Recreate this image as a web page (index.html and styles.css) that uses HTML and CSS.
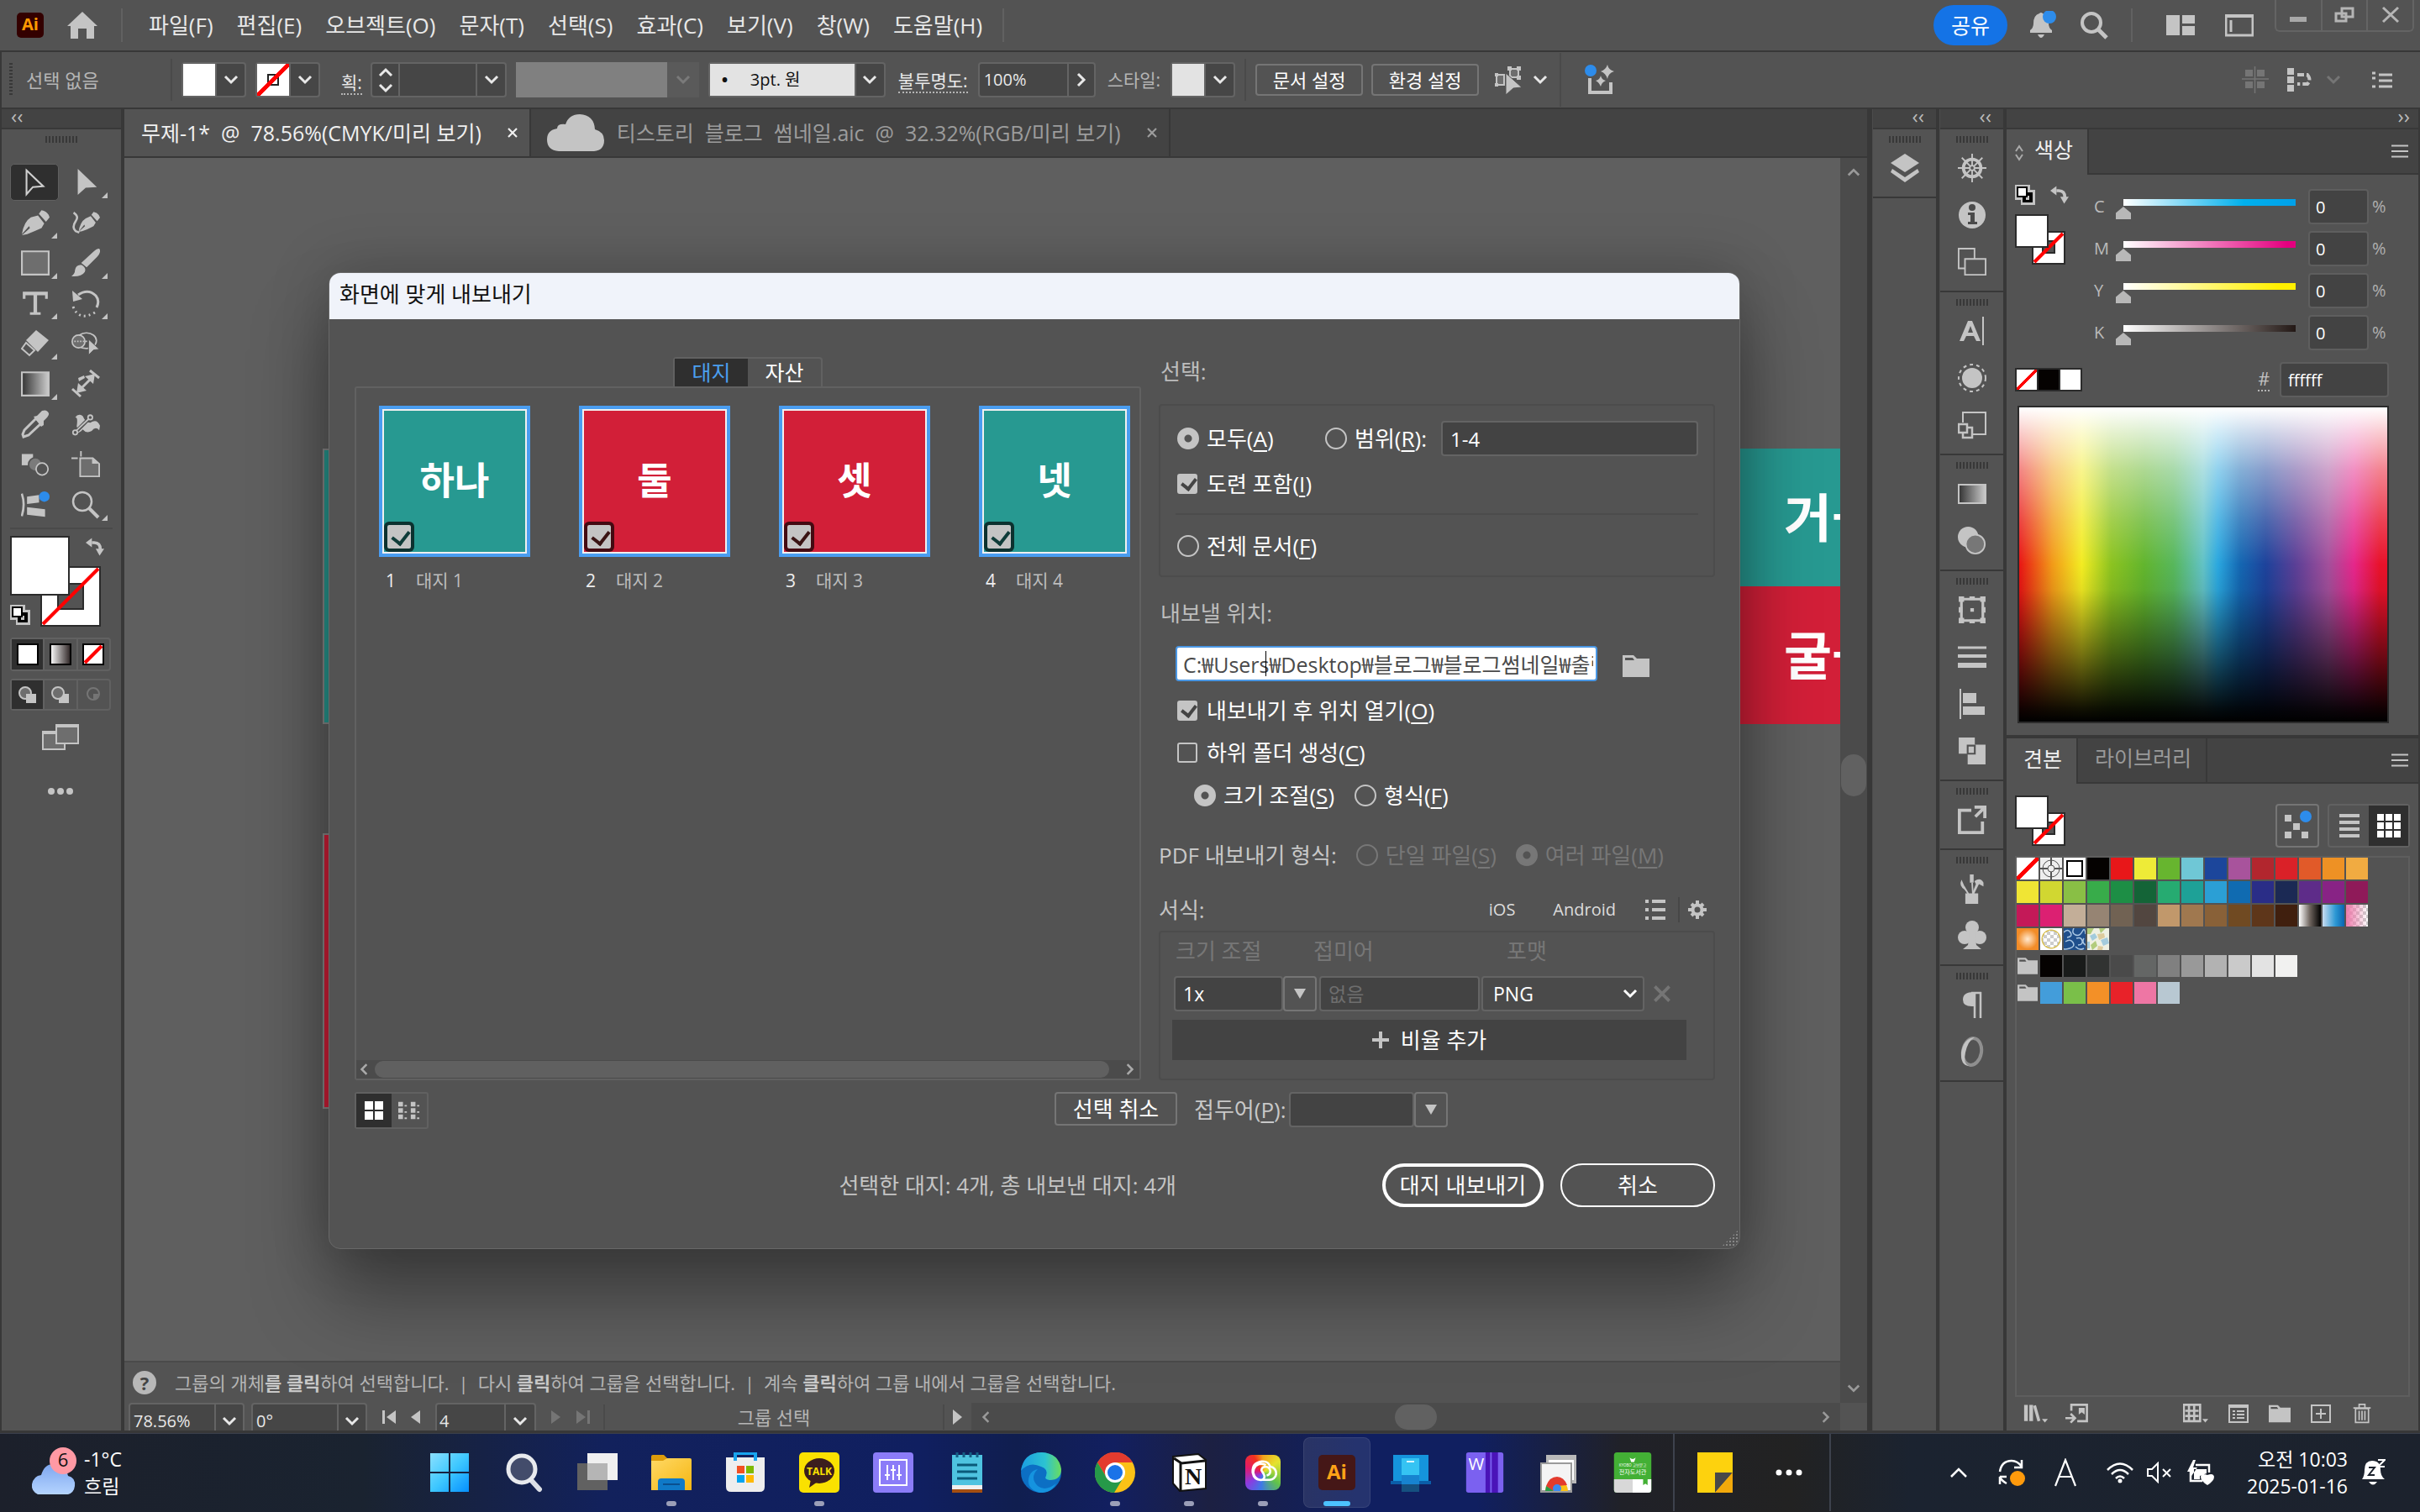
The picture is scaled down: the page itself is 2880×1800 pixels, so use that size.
FILE: index.html
```html
<!DOCTYPE html>
<html lang="ko">
<head>
<meta charset="utf-8">
<title>화면에 맞게 내보내기</title>
<meta name="viewport" content="width=device-width, initial-scale=1">
<link rel="stylesheet" href="styles.css">
</head>
<body>
<svg class="defs" aria-hidden="true">
  <defs>
    <linearGradient id="gray" x1="0" x2="1"><stop offset="0" stop-color="#333"/><stop offset="1" stop-color="#ccc"/></linearGradient>
    <linearGradient id="mono" x1="0" x2="1"><stop offset="0" stop-color="#fff"/><stop offset="1" stop-color="#2b2222"/></linearGradient>
    <linearGradient id="sky" x1="0" y1="0" x2="1" y2="1"><stop offset="0" stop-color="#8be0ff"/><stop offset=".5" stop-color="#3fc8ff"/><stop offset="1" stop-color="#0590ff"/></linearGradient>
    <linearGradient id="gold" x1="0" y1="0" x2="1" y2="1"><stop offset="0" stop-color="#ffd965"/><stop offset="1" stop-color="#f6b612"/></linearGradient>
    <linearGradient id="edgeA" x1="0" y1="0" x2="1" y2="0"><stop offset="0" stop-color="#1b9de2"/><stop offset=".6" stop-color="#2cc3d2"/><stop offset="1" stop-color="#6bdc5c"/></linearGradient>
    <linearGradient id="cloudy" x1="0" y1="0" x2="0" y2="1"><stop offset="0" stop-color="#7ea6ee"/><stop offset="1" stop-color="#b4d4ff"/></linearGradient>
  </defs>
  <symbol id="down" viewBox="0 0 18 12"><path d="M2 2l7 7 7-7" fill="none" stroke="currentColor" stroke-width="3"/></symbol>
  <symbol id="up" viewBox="0 0 18 12"><path d="M2 10l7-7 7 7" fill="none" stroke="currentColor" stroke-width="3"/></symbol>
  <symbol id="right" viewBox="0 0 12 18"><path d="M2 2l7 7-7 7" fill="none" stroke="currentColor" stroke-width="3"/></symbol>
  <symbol id="left" viewBox="0 0 12 18"><path d="M10 2L3 9l7 7" fill="none" stroke="currentColor" stroke-width="3"/></symbol>
  <symbol id="tri" viewBox="0 0 14 14"><path d="M0 1h14L7 13z" fill="currentColor"/></symbol>
  <symbol id="fold" viewBox="0 0 32 26"><path d="M0 0h13l4 4h15v22H0zM3 3v3h11l-2-3z" fill="currentColor" fill-rule="evenodd"/></symbol>
  <symbol id="menu" viewBox="0 0 20 16"><path d="M0 1.500h20M0 8h20M0 14.500h20" stroke="currentColor" stroke-width="2"/></symbol>
  <symbol id="x" viewBox="0 0 14 14"><path d="M2 2l10 10M12 2L2 12" stroke="currentColor" stroke-width="2.200"/></symbol>
  <symbol id="swap" viewBox="0 0 24 24"><path d="M8 6h3q8 0 8 9" fill="none" stroke="currentColor" stroke-width="4"/><path d="M0 6l8-6v12zM13 14h11l-6 9z" fill="currentColor"/></symbol>
  <symbol id="reset" viewBox="0 0 24 24"><path d="M0 0h18v6h6v18H7v-6H0z" fill="#c4c4c4"/><path d="M8 9h13v12H9v-6h4v3h4v-5H8z" fill="#000"/><path d="M3 3h11v11H3z" fill="#fff" stroke="#000" stroke-width="2"/></symbol>
  <symbol id="pen" viewBox="0 0 32 30"><path d="M1 28Q3 14 11 9l8-2 7 9-3 5Q14 25 7 28L1 29l9-8-1-2zM20 5l3-4q7 1 9 8l-4 5z" fill="currentColor"/></symbol>
</svg>

<header class="titlebar">
  <span class="ai-badge">Ai</span>
  <svg class="home" viewBox="0 0 36 32"><path d="M18 0L36 17h-4v15h-9V20h-10v12H4V17H0z" fill="#c4c4c4"/></svg>
  <span class="vsep"></span>
  <nav class="menus">
    <a href="#">파일(F)</a><a href="#">편집(E)</a><a href="#">오브젝트(O)</a><a href="#">문자(T)</a><a href="#">선택(S)</a><a href="#">효과(C)</a><a href="#">보기(V)</a><a href="#">창(W)</a><a href="#">도움말(H)</a>
  </nav>
  <span class="vsep"></span>
  <div class="title-right">
    <button class="share">공유</button>
    <svg class="bell" viewBox="0 0 32 34"><path d="M12 3q2-2 4 0 7 2 7 12 0 5 4 8v3H1v-3q4-3 4-8Q5 5 12 3zM10 28h8q-4 8-8 0z" fill="#c4c4c4"/><circle cx="24" cy="7" r="8" fill="#2d8ceb"/></svg>
    <svg class="find" viewBox="0 0 34 34"><circle cx="14" cy="14" r="11" fill="none" stroke="#c4c4c4" stroke-width="4"/><path d="M22 22l10 10" stroke="#c4c4c4" stroke-width="5"/></svg>
    <span class="vsep"></span>
    <svg class="lay" viewBox="0 0 34 24"><path d="M0 0h16v24H0zM19 0h15v10H19zM19 13h15v11H19z" fill="#c4c4c4"/></svg>
    <svg class="work" viewBox="0 0 34 28"><path d="M1 3h32v23H1zM7 8v14" fill="none" stroke="#c4c4c4" stroke-width="3"/><path d="M0 1h34v4H0z" fill="#c4c4c4"/></svg>
    <div class="wincontrols">
      <button aria-label="최소화"><svg viewBox="0 0 28 24"><path d="M4 14h20v6H4z" fill="#a8a8a8"/></svg></button>
      <button aria-label="이전 크기로"><svg viewBox="0 0 28 24"><path d="M11 4h13v10H11zM4 10h12v9H4z" fill="#535353" stroke="#b5b5b5" stroke-width="3"/></svg></button>
      <button aria-label="닫기"><svg viewBox="0 0 28 24"><path d="M5 3l18 17M23 3L5 20" stroke="#b5b5b5" stroke-width="3"/></svg></button>
    </div>
  </div>
</header>

<section class="control">
  <span class="vgrip"></span>
  <span class="c-state">선택 없음</span>
  <span class="csep"></span>
  <div class="combo"><span class="sw white"></span><button aria-label="칠"><svg><use href="#down"/></svg></button></div>
  <div class="combo"><span class="sw none"><i></i></span><button aria-label="획 색상"><svg><use href="#down"/></svg></button></div>
  <label class="dotted c-stroke" for="strokew">획:</label>
  <div class="combo c-step"><span class="steps"><svg><use href="#up"/></svg><svg><use href="#down"/></svg></span><input id="strokew" type="text"><button aria-label="획 두께"><svg><use href="#down"/></svg></button></div>
  <div class="profile"><span></span><svg><use href="#down"/></svg></div>
  <div class="combo c-brush"><span class="brush"><b>•</b>3pt. 원</span><button aria-label="브러쉬"><svg><use href="#down"/></svg></button></div>
  <label class="dotted c-op" for="op">불투명도:</label>
  <div class="combo c-opv"><input id="op" type="text" value="100%"><button aria-label="불투명도"><svg class="sr"><use href="#right"/></svg></button></div>
  <span class="c-style">스타일:</span>
  <div class="combo"><span class="sw pale"></span><button aria-label="스타일"><svg><use href="#down"/></svg></button></div>
  <span class="csep c-sep2"></span>
  <button class="cbtn">문서 설정</button>
  <button class="cbtn">환경 설정</button>
  <svg class="i36" viewBox="0 0 36 36"><path d="M3 12h9v12H3zM19 5h10v10H19z" fill="#6e6e6e" stroke="#c4c4c4" stroke-width="2"/><path d="M1 10h4v4H1zM1 22h4v4H1zM16 2h5v5h-5zM27 2h5v5h-5zM27 13h5v5h-5zM16 13h5v5h-5z" fill="#c4c4c4"/><path d="M14 10l19 17-10 1-9 8z" fill="#c4c4c4" stroke="#535353"/></svg>
  <svg class="chev"><use href="#down"/></svg>
  <span class="csep tall"></span>
  <svg class="i36" viewBox="0 0 36 36"><path d="M6 16v17h25V21" fill="none" stroke="#c4c4c4" stroke-width="4"/><path d="M27 0q1 6 8 8-7 2-8 9-2-7-8-9 6-2 8-8zM19 13q1 5 6 6-5 2-6 7-2-5-6-7 5-1 6-6z" fill="#c4c4c4"/><circle cx="7" cy="7" r="7" fill="#2d8ceb"/></svg>
  <div class="control-right">
    <svg class="i32 dim" viewBox="0 0 32 32"><path d="M4 4h9v8H4zM18 4h9v8h-9zM4 18h9v8H4zM18 18h9v8h-9z" fill="currentColor"/><path d="M15.500 0v32M0 15h32" stroke="currentColor" stroke-width="1.500"/></svg>
    <svg class="i32" viewBox="0 0 32 32"><path d="M1 2h8v8H1zM1 12h8v8H1zM1 22h8v8H1z" fill="#c4c4c4"/><path d="M13 10h12q5 6 0 11H13" fill="none" stroke="#c4c4c4" stroke-width="4" stroke-dasharray="8 3"/></svg>
    <svg class="chev dim"><use href="#down"/></svg>
    <svg class="i24 gapl" viewBox="0 0 24 20"><path d="M0 2h4M0 8h4M0 18h4M8 4h16M8 11h16M8 18h16" stroke="#c4c4c4" stroke-width="3"/></svg>
  </div>
</section>

<main class="app">
  <aside class="toolbar">
    <div class="dhead left"><span>‹‹</span></div>
    <span class="grip"></span>
    <div class="tools">
      <button class="on" aria-label="선택"><svg viewBox="0 0 32 36"><path d="M6 3l21 20-13 1-8 9z" fill="none" stroke="#d0d0d0" stroke-width="2.200"/></svg></button>
      <button class="more" aria-label="직접 선택"><svg viewBox="0 0 32 36"><path d="M6 1l24 23-14 1L6 34z" fill="currentColor"/></svg></button>
      <button class="more" aria-label="펜"><svg><use href="#pen"/></svg></button>
      <button aria-label="곡률"><svg viewBox="0 0 40 32"><path d="M3 2q8 5 3 12-6 9 0 14l5 2" fill="none" stroke="currentColor" stroke-width="3"/><path d="M10 29Q12 15 20 10l7-3 7 9-3 5Q22 26 15 28l-5 1 9-8-1-2zM28 5l3-4q7 1 9 8l-4 5z" fill="currentColor"/></svg></button>
      <button class="more" aria-label="사각형"><svg viewBox="0 0 32 32"><path d="M1 3h30v26H1z" fill="#6e6e6e" stroke="currentColor" stroke-width="2"/></svg></button>
      <button class="more" aria-label="페인트브러쉬"><svg viewBox="0 0 32 32"><path d="M31 0q3 3-2 9L17 21l-6-5L24 4q4-4 7-4zM0 31q4-3 4-7 1-6 7-6 6 3 4 8-4 6-15 5z" fill="currentColor"/></svg></button>
      <button class="more" aria-label="문자"><svg viewBox="0 0 32 32"><path d="M2 3h28v8h-3V7h-9v19h4v3H10v-3h4V7H5v4H2z" fill="currentColor"/></svg></button>
      <button class="more" aria-label="회전"><svg viewBox="0 0 34 34"><path d="M8 7Q20-1 29 8q5 6 1 14" fill="none" stroke="currentColor" stroke-width="3"/><path d="M1 2l1 13 11-3z" fill="currentColor"/><path d="M2 21q7 18 26 7" fill="none" stroke="currentColor" stroke-width="3" stroke-dasharray="2 4"/></svg></button>
      <button class="more" aria-label="지우개"><svg viewBox="0 0 34 34"><path d="M18 1l15 12-13 14L6 13z" fill="currentColor"/><path d="M6 16L1 23l9 8 6-6z" fill="none" stroke="currentColor" stroke-width="2"/></svg></button>
      <button aria-label="도형 구성"><svg viewBox="0 0 40 34"><ellipse cx="21" cy="13" rx="14" ry="11" fill="none" stroke="currentColor" stroke-width="2"/><circle cx="10" cy="14" r="9" fill="#6e6e6e" stroke="currentColor" stroke-width="2"/><path d="M4 14h20" stroke="currentColor" stroke-width="2" stroke-dasharray="2 2"/><path d="M24 11l15 14-8 1-7 7z" fill="currentColor" stroke="#535353"/></svg></button>
      <button class="more" aria-label="그레이디언트"><svg viewBox="0 0 32 32"><path d="M1 3h30v26H1z" fill="url(#gray)" stroke="currentColor" stroke-width="2"/></svg></button>
      <button aria-label="치수"><svg viewBox="0 0 34 34"><path d="M9 25L25 9M1 23l10 9M22 1l11 9" stroke="currentColor" stroke-width="3"/><path d="M6 28l2-12 10 9zM28 5l-2 12-10-9zM8 10l7-3 1 3-7 4z" fill="currentColor"/></svg></button>
      <button aria-label="스포이드"><svg viewBox="0 0 34 34"><path d="M18 10l6 6L9 30l-6 2-1-3 2-5z" fill="none" stroke="currentColor" stroke-width="3"/><path d="M15 8l4-1 6-6q6-2 8 3 1 3-6 9v5l-3 2z" fill="currentColor"/></svg></button>
      <button aria-label="퍼펫 뒤틀기"><svg viewBox="0 0 38 34"><path d="M5 8Q9 2 15 6q4 9 10 9 9-6 13 4l-1 6q-5-6-10 1-7 4-12-2-4 5-9 5 3-6 1-9Q9 7 5 8z" fill="currentColor"/><path d="M4 29L25 8" stroke="#535353" stroke-width="5"/><path d="M6 26L23 10" stroke="currentColor" stroke-width="2"/><circle cx="5" cy="28" r="3" fill="#535353" stroke="currentColor" stroke-width="2"/><circle cx="25" cy="8" r="3" fill="#535353" stroke="currentColor" stroke-width="2"/></svg></button>
      <button aria-label="블렌드"><svg viewBox="0 0 38 32"><path d="M1 2h15v15H1z" fill="currentColor"/><circle cx="19" cy="16" r="9" fill="#7b7b7b" stroke="#535353" stroke-width="2"/><circle cx="28" cy="22" r="8" fill="#535353" stroke="currentColor" stroke-width="2"/></svg></button>
      <button aria-label="대지"><svg viewBox="0 0 36 34"><path d="M0 9h8M12 0v7" stroke="currentColor" stroke-width="2"/><path d="M11 9h16l8 7v16H11z" fill="#6e6e6e" stroke="currentColor" stroke-width="2"/><path d="M26 9v7h8z" fill="currentColor"/></svg></button>
      <button aria-label="리페인트"><svg viewBox="0 0 38 36"><path d="M1 3q5 14 0 30" fill="none" stroke="currentColor" stroke-width="3"/><path d="M8 7l16-2v10L8 17zM8 21l24 3v10L8 31z" fill="currentColor"/><circle cx="31" cy="7" r="7" fill="#2d8ceb"/></svg></button>
      <button class="more" aria-label="돋보기"><svg viewBox="0 0 34 34"><circle cx="13" cy="13" r="11" fill="none" stroke="currentColor" stroke-width="2.500"/><path d="M21 21l11 11" stroke="currentColor" stroke-width="4"/></svg></button>
    </div>
    <hr class="tline">
    <svg class="fs" viewBox="0 0 120 108"><path d="M38 37h70v70H38z" fill="#fff" stroke="#2b2b2b" stroke-width="2"/><path d="M58 57h30v30H58z" fill="#535353" stroke="#2b2b2b" stroke-width="2"/><path d="M40 105l66-66" stroke="#f00" stroke-width="4"/><path d="M2 1h69v69H2z" fill="#fff" stroke="#2b2b2b" stroke-width="2"/><use href="#swap" x="91" y="2" width="22" height="23"/><use href="#reset" x="1" y="81" width="24" height="26"/></svg>
    <div class="trio">
      <button class="on" aria-label="색상"><svg viewBox="0 0 26 26"><path d="M1 1h24v24H1z" fill="#fff" stroke="#000" stroke-width="2"/></svg></button>
      <button aria-label="그레이디언트 칠"><svg viewBox="0 0 26 26"><path d="M1 1h24v24H1z" fill="url(#mono)" stroke="#000" stroke-width="2"/></svg></button>
      <button aria-label="없음"><svg viewBox="0 0 26 26"><path d="M1 1h24v24H1z" fill="#fff" stroke="#000" stroke-width="2"/><path d="M3 23L23 3" stroke="#f00" stroke-width="4"/></svg></button>
    </div>
    <div class="trio">
      <button class="on" aria-label="표준 그리기"><svg viewBox="0 0 22 20"><circle cx="8" cy="8" r="7" fill="#6e6e6e" stroke="#c4c4c4" stroke-width="2"/><path d="M9 9h12v11H9z" fill="#c4c4c4"/></svg></button>
      <button aria-label="배경 그리기"><svg viewBox="0 0 22 20"><path d="M9 9h12v11H9z" fill="#c4c4c4"/><circle cx="8" cy="8" r="7" fill="#6e6e6e" stroke="#c4c4c4" stroke-width="2"/></svg></button>
      <button class="dim" aria-label="내부 그리기"><svg viewBox="0 0 22 20"><circle cx="11" cy="9" r="7" fill="none" stroke="currentColor" stroke-width="2"/><path d="M11 9h7l-4 7h-3z" fill="currentColor"/></svg></button>
    </div>
    <svg class="screenmode" viewBox="0 0 44 32"><path d="M1 10h26v21H1z" fill="#6e6e6e" stroke="#c4c4c4" stroke-width="2"/><path d="M17 2h26v22H17z" fill="#6e6e6e" stroke="#c4c4c4" stroke-width="2"/><path d="M17 3h26M1 11h16" stroke="#c4c4c4" stroke-width="4"/></svg>
    <svg class="dots3" viewBox="0 0 30 8"><circle cx="4" cy="4" r="4"/><circle cx="15" cy="4" r="4"/><circle cx="26" cy="4" r="4"/></svg>
  </aside>

  <section class="doc">
    <div class="tabs">
      <div class="tab active"><span>무제-1*&nbsp; @&nbsp; 78.56%(CMYK/미리 보기)</span><svg><use href="#x"/></svg></div>
      <div class="tab"><svg class="cloud" viewBox="0 0 68 44"><path d="M14 44Q0 43 0 30q0-11 12-13 0-6 10-5Q26 0 39 0q17 1 18 18 11 3 11 13 0 12-12 13z" fill="#c4c4c4"/></svg><span>티스토리&nbsp; 블로그&nbsp; 썸네일.aic&nbsp; @&nbsp; 32.32%(RGB/미리 보기)</span><svg><use href="#x"/></svg></div>
    </div>
    <div class="stage">
      <div class="stage-main">
        <div class="canvas">
          <div class="art l teal"></div>
          <div class="art l red"></div>
          <div class="art r teal">거ㅡ</div>
          <div class="art r red">굴ㅡ</div>
        </div>
        <div class="hint"><span class="q">?</span><p>그룹의 개체<b>를 클릭</b>하여 선택합니다.<i>|</i>다시 <b>클릭</b>하여 그룹을 선택합니다.<i>|</i>계속 <b>클릭</b>하여 그룹 내에서 그룹을 선택합니다.</p></div>
      </div>
      <div class="vscroll"><svg><use href="#up"/></svg><span></span><svg><use href="#down"/></svg></div>
    </div>
    <div class="status">
      <div class="combo zoomv"><input aria-label="확대" type="text" value="78.56%"><button aria-label="확대 목록"><svg><use href="#down"/></svg></button></div>
      <div class="combo zoomv"><input aria-label="회전" type="text" value="0°"><button aria-label="회전 목록"><svg><use href="#down"/></svg></button></div>
      <svg class="nav" viewBox="0 0 50 18"><path d="M1 1h3v16H1zM17 1v16L6 9zM46 1v16L35 9z" fill="#c4c4c4"/></svg>
      <div class="combo pagev"><input aria-label="대지 번호" type="text" value="4"><button aria-label="대지 목록"><svg><use href="#down"/></svg></button></div>
      <svg class="nav dim" viewBox="0 0 50 18"><path d="M2 1v16l11-8zM32 1v16l11-8zM45 1h3v16h-3z" fill="currentColor"/></svg>
      <span class="stext">그룹 선택</span>
      <svg class="play" viewBox="0 0 12 18"><path d="M0 0v18l11-9z" fill="#c4c4c4"/></svg>
      <div class="hscroll"><svg><use href="#left"/></svg><span></span><svg><use href="#right"/></svg></div>
    </div>
  </section>

  <aside class="dock">
    <div class="col strip">
      <div class="dhead"><span>‹‹</span></div>
      <div class="sec"><span class="grip"></span>
        <button aria-label="레이어"><svg viewBox="0 0 34 34"><path d="M17 0l17 11-17 11L0 11z" fill="currentColor"/><path d="M2 18l15 10 15-10 2 4-17 12L0 22z" fill="currentColor"/></svg></button></div>
    </div>
    <div class="col strip">
      <div class="dhead"><span>‹‹</span></div>
      <div class="sec"><span class="grip"></span>
        <button aria-label="색상 안내"><svg viewBox="0 0 36 36"><circle cx="18" cy="18" r="11" fill="none" stroke="currentColor" stroke-width="4"/><circle cx="18" cy="18" r="3" fill="none" stroke="currentColor" stroke-width="2"/><path d="M18 0v15M18 21v15M0 18h15M21 18h15M5 5l11 11M20 20l11 11M31 5L20 16M16 20L5 31" stroke="currentColor" stroke-width="2"/></svg></button>
        <button aria-label="정보"><svg viewBox="0 0 34 34"><circle cx="17" cy="17" r="16" fill="currentColor"/><circle cx="17" cy="8" r="4" fill="#4a4a4a"/><path d="M12 14h8v11h3v3H12v-3h3v-8h-3z" fill="#4a4a4a"/></svg></button>
        <button aria-label="대지"><svg viewBox="0 0 36 36"><path d="M1 1h20v25H1z" fill="none" stroke="currentColor" stroke-width="2"/><path d="M9 14h26v20H9z" fill="#535353" stroke="currentColor" stroke-width="2"/></svg></button></div>
      <div class="sec"><span class="grip"></span>
        <button aria-label="문자"><svg viewBox="0 0 34 36"><path d="M30 1v34" stroke="currentColor" stroke-width="2"/><path d="M2 30L12 6h5l10 24h-5l-3-6h-9l-3 6zM12 20h6l-3-8z" fill="currentColor" fill-rule="evenodd"/></svg></button>
        <button aria-label="모양"><svg viewBox="0 0 34 34"><circle cx="17" cy="17" r="12" fill="currentColor"/><circle cx="17" cy="17" r="16" fill="none" stroke="currentColor" stroke-width="2" stroke-dasharray="4 4"/></svg></button>
        <button aria-label="에셋 내보내기"><svg viewBox="0 0 34 34"><path d="M6 14V2h27v26H18" fill="none" stroke="currentColor" stroke-width="2"/><path d="M1 16h10v10H1zM12 20h5v12H6v-5" fill="none" stroke="currentColor" stroke-width="2.500"/></svg></button></div>
      <div class="sec"><span class="grip"></span>
        <button aria-label="그레이디언트"><svg viewBox="0 0 34 34"><path d="M1 6h32v22H1z" fill="url(#gray)" stroke="currentColor" stroke-width="2"/></svg></button>
        <button aria-label="투명도"><svg viewBox="0 0 36 36"><circle cx="13" cy="13" r="13" fill="currentColor"/><circle cx="22" cy="22" r="12" fill="#777" stroke="currentColor" stroke-width="2"/></svg></button></div>
      <div class="sec"><span class="grip"></span>
        <button aria-label="변형"><svg viewBox="0 0 32 32"><path d="M4 4h24v24H4z" fill="none" stroke="currentColor" stroke-width="3"/><path d="M1 1h6v6H1zM13 1h6v4h-6zM25 1h6v6h-6zM1 13h4v6H1zM27 13h4v6h-4zM1 25h6v6H1zM13 27h6v4h-6zM25 25h6v6h-6zM14 14h4v4h-4z" fill="currentColor"/></svg></button>
        <button aria-label="획"><svg viewBox="0 0 34 30"><path d="M0 4h34" stroke="currentColor" stroke-width="3"/><path d="M0 14h34" stroke="currentColor" stroke-width="4"/><path d="M0 25h34" stroke="currentColor" stroke-width="6"/></svg></button>
        <button aria-label="정렬"><svg viewBox="0 0 32 36"><path d="M2 0v36" stroke="currentColor" stroke-width="2"/><path d="M5 5h16v12H5zM5 21h26v10H5z" fill="currentColor"/></svg></button>
        <button aria-label="패스파인더"><svg viewBox="0 0 32 32"><path d="M1 1h18v8h12v22H11V19H1z" fill="currentColor"/><path d="M11 19v-9h8v9z" fill="#c4c4c4" stroke="#535353" stroke-width="2"/></svg></button></div>
      <div class="sec"><span class="grip"></span>
        <button aria-label="내보내기"><svg viewBox="0 0 36 36"><path d="M17 6H2v28h29V20" fill="none" stroke="currentColor" stroke-width="4"/><path d="M22 14L33 3M21 2h13v14" fill="none" stroke="currentColor" stroke-width="4"/></svg></button></div>
      <div class="sec"><span class="grip"></span>
        <button aria-label="브러쉬"><svg viewBox="0 0 34 40"><path d="M8 26h17v14H8zM3 8q-4 8 4 13l4 5M14 1h5v11h-5zM20 10q8-6 12 2v5l-6-3-6 12h-3l5-12z" fill="currentColor"/><path d="M6 17l6 10M17 12l1 15" stroke="currentColor" stroke-width="2"/></svg></button>
        <button aria-label="심볼"><svg viewBox="0 0 34 36"><circle cx="17" cy="8" r="8" fill="currentColor"/><circle cx="8" cy="20" r="8" fill="currentColor"/><circle cx="26" cy="20" r="8" fill="currentColor"/><path d="M14 14h6l2 15 6 5H6l6-5z" fill="currentColor"/></svg></button></div>
      <div class="sec"><span class="grip"></span>
        <button aria-label="단락"><svg viewBox="0 0 32 36"><path d="M26 3v31M19 3v31M27 4H15" stroke="currentColor" stroke-width="2.500" fill="none"/><path d="M18 3v17q-13 1-13-8 0-9 13-9z" fill="currentColor"/></svg></button>
        <button aria-label="OpenType"><svg viewBox="0 0 32 36"><ellipse cx="16" cy="18" rx="11" ry="16" transform="rotate(10 16 18)" fill="none" stroke="#8f8f8f" stroke-width="4"/><path d="M19 1Q6 2 3 19q-1 15 9 16-7-3-4-16 3-14 11-18z" fill="currentColor"/></svg></button></div>
    </div>
    <div class="col panels">
      <div class="dhead"><span>››</span></div>
      <section class="panel">
        <div class="ptabs"><span class="ptab act"><svg class="ud" viewBox="0 0 10 20"><path d="M1 8l4-6 4 6M1 12l4 6 4-6" fill="none" stroke="#aaa" stroke-width="2"/></svg>색상</span><span class="phead"><svg class="mn"><use href="#menu"/></svg></span></div>
        <div class="colorbody">
          <div class="ctop">
            <svg class="cfs" viewBox="0 0 66 100"><use href="#reset" x="0" y="0" width="24" height="24"/><use href="#swap" x="42" y="1" width="22" height="23"/><path d="M21 56h38v38H21z" fill="#fff" stroke="#2b2b2b" stroke-width="2"/><path d="M33 67h14v14H33z" fill="#535353" stroke="#2b2b2b" stroke-width="2"/><path d="M23 92l34-34" stroke="#f00" stroke-width="4"/><path d="M1 36h38v38H1z" fill="#fff" stroke="#2b2b2b" stroke-width="2"/></svg>
            <div class="sliders">
              <label for="sc">C</label><input class="rg c" id="sc" type="range" value="0"><input aria-label="C 값" class="num" type="text" value="0"><span>%</span>
              <label for="sm">M</label><input class="rg m" id="sm" type="range" value="0"><input aria-label="M 값" class="num" type="text" value="0"><span>%</span>
              <label for="sy">Y</label><input class="rg y" id="sy" type="range" value="0"><input aria-label="Y 값" class="num" type="text" value="0"><span>%</span>
              <label for="sk">K</label><input class="rg k" id="sk" type="range" value="0"><input aria-label="K 값" class="num" type="text" value="0"><span>%</span>
            </div>
          </div>
          <div class="hexrow">
            <div class="mini"><span class="slash"></span><span class="black"></span><span></span></div>
            <label class="dotted" for="hex">#</label><input class="num hex" id="hex" type="text" value="ffffff">
          </div>
          <div class="spectrum"></div>
        </div>
      </section>
      <section class="panel swatches">
        <div class="ptabs"><span class="ptab act">견본</span><span class="ptab">라이브러리</span><span class="phead"><svg class="mn"><use href="#menu"/></svg></span></div>
        <div class="swhead">
          <svg class="sfs" viewBox="0 0 60 60"><path d="M21 21h38v38H21z" fill="#fff" stroke="#2b2b2b" stroke-width="2"/><path d="M33 32h14v14H33z" fill="#535353" stroke="#2b2b2b" stroke-width="2"/><path d="M23 57l34-34" stroke="#f00" stroke-width="4"/><path d="M1 1h38v38H1z" fill="#fff" stroke="#2b2b2b" stroke-width="2"/></svg>
          <button class="vb" aria-label="생성형 색상"><svg viewBox="0 0 36 36"><path d="M3 5h8v8H3zM13 15h8v8h-8zM3 25h8v8H3zM23 25h8v8h-8z" fill="#c4c4c4"/><circle cx="28" cy="7" r="7" fill="#2d8ceb"/></svg></button>
          <div class="vgroup">
            <button aria-label="목록"><svg viewBox="0 0 28 28"><path d="M2 2h24M2 10h24M2 18h24M2 26h24" stroke="#c4c4c4" stroke-width="4"/></svg></button>
            <button class="on" aria-label="격자"><svg viewBox="0 0 28 28"><path d="M0 0h8v8H0zM10 0h8v8h-8zM20 0h8v8h-8zM0 10h8v8H0zM10 10h8v8h-8zM20 10h8v8h-8zM0 20h8v8H0zM10 20h8v8h-8zM20 20h8v8h-8z" fill="#fff"/></svg></button>
          </div>
        </div>
        <div class="swbox">
          <div class="swgrid">
            <span class="slash"></span><svg viewBox="0 0 26 26"><path d="M0 0h26v26H0z" fill="#eee"/><circle cx="13" cy="13" r="4" fill="none" stroke="#555"/><circle cx="13" cy="13" r="10" fill="none" stroke="#555"/><path d="M13 0v9M13 17v9M0 13h9M17 13h9" stroke="#555" stroke-width="2"/></svg><span class="framed"></span><span style="background:#050201"></span><span style="background:#e81719"></span><span style="background:#eeeb37"></span><span style="background:#67b52f"></span><span style="background:#6fc7d6"></span><span style="background:#1c469b"></span><span style="background:#a8539c"></span><span style="background:#b2262e"></span><span style="background:#da2128"></span><span style="background:#e15a29"></span><span style="background:#ee9124"></span><span style="background:#f1ab41"></span>
            <span style="background:#f0e534"></span><span style="background:#d1d731"></span><span style="background:#89bf45"></span><span style="background:#38ac4a"></span><span style="background:#1d8e45"></span><span style="background:#146437"></span><span style="background:#26ab71"></span><span style="background:#1ea197"></span><span style="background:#2b9fd5"></span><span style="background:#106bb1"></span><span style="background:#2a2d87"></span><span style="background:#1b2954"></span><span style="background:#5e2c89"></span><span style="background:#882385"></span><span style="background:#8f1a59"></span>
            <span style="background:#c41958"></span><span style="background:#dc2072"></span><span style="background:#c3ae98"></span><span style="background:#968473"></span><span style="background:#716253"></span><span style="background:#524640"></span><span style="background:#c1986b"></span><span style="background:#a0784f"></span><span style="background:#896138"></span><span style="background:#704a22"></span><span style="background:#5e361a"></span><span style="background:#401f0e"></span><span class="gbw"></span><span class="gblue"></span><span class="gpink"></span>
            <span class="gorange"></span><span class="gcircle"></span><svg viewBox="0 0 26 26"><path d="M0 0h26v26H0z" fill="#1f4f8c"/><path d="M0 5q5-5 8 0t-4 6M12 0q-3 6 2 8t8-4 4 3M2 16q6-4 9 1t-4 7-7 0M15 12q6-2 7 3t-5 5M24 12q-3 5 2 8M14 22q5 5 10 2" fill="none" stroke="#a9c6e2" stroke-width="1.500"/></svg><svg viewBox="0 0 26 26"><path d="M0 0h26v26H0z" fill="#eef0e2"/><path d="M0 0h8L4 7H0zM14 0h8l-6 6zM4 20l6-5 2 6-6 5z" fill="#b2cc7c"/><path d="M3 9l6-3 3 5-6 4zM16 14l8-3 2 7-7 3zM0 16h3v8H0z" fill="#a3cbdc"/><path d="M12 7l8-1 1 5-7 3zM13 21l6 1-1 4h-6z" fill="#ddcb9c"/></svg>
          </div>
          <div class="swgrid grp"><svg><use href="#fold"/></svg><span style="background:#050201"></span><span style="background:#191b1a"></span><span style="background:#313332"></span><span style="background:#4a4a4a"></span><span style="background:#646665"></span><span style="background:#808080"></span><span style="background:#999"></span><span style="background:#b2b2b2"></span><span style="background:#cacaca"></span><span style="background:#e3e3e3"></span><span style="background:#f1f1f0"></span></div>
          <div class="swgrid grp"><svg><use href="#fold"/></svg><span style="background:#439dda"></span><span style="background:#7abf49"></span><span style="background:#f39027"></span><span style="background:#e82229"></span><span style="background:#ee76a4"></span><span style="background:#b8c8d2"></span></div>
        </div>
        <div class="swfoot">
          <svg viewBox="0 0 34 26"><path d="M1 1h5v22H1zM8 1h5v22H8z" fill="#c4c4c4"/><path d="M15 2l6 21" stroke="#c4c4c4" stroke-width="4"/><path d="M25 20h8l-4 5z" fill="#c4c4c4"/></svg>
          <svg viewBox="0 0 34 28"><path d="M8 10V2h21v22H16" fill="none" stroke="#c4c4c4" stroke-width="3"/><path d="M14 6h12v9l-4-3-4 3V6" fill="#c4c4c4"/><path d="M0 20h12M7 14l6 6-6 6" fill="none" stroke="#c4c4c4" stroke-width="3"/></svg>
          <svg class="push" viewBox="0 0 34 26"><path d="M1 1h22v22H1zM3 9h18M3 16h18M8 2v20M15 2v20" fill="none" stroke="#c4c4c4" stroke-width="3"/><path d="M26 20h8l-4 5z" fill="#c4c4c4"/></svg>
          <svg viewBox="0 0 26 24"><path d="M2 2h22v20H2zM6 9h3M6 13h3M6 17h3M11 9h9M11 13h9M11 17h9" fill="none" stroke="#c4c4c4" stroke-width="2"/><path d="M1 1h24v4H1z" fill="#c4c4c4"/></svg>
          <svg viewBox="0 0 32 26"><use href="#fold"/></svg>
          <svg viewBox="0 0 26 24"><path d="M2 2h22v20H2zM7 12h12M13 6v12" fill="none" stroke="#c4c4c4" stroke-width="2"/></svg>
          <svg viewBox="0 0 26 28"><path d="M4 7h18v19H4zM1 6h24M9 5V1h8v4M9 10v13M13 10v13M17 10v13" fill="none" stroke="#c4c4c4" stroke-width="2"/></svg>
        </div>
      </section>
    </div>
  </aside>
</main>

<form class="dialog" onsubmit="return false">
  <h1>화면에 맞게 내보내기</h1>
  <div class="dbody">
    <div class="dleft">
      <div class="dtabs"><button class="on" type="button">대지</button><button type="button">자산</button></div>
      <div class="boards">
        <div class="thumbs">
          <label class="thumb"><span class="face teal">하나<input type="checkbox" checked></span><span class="cap"><b>1</b>대지 1</span></label>
          <label class="thumb"><span class="face red">둘<input type="checkbox" checked></span><span class="cap"><b>2</b>대지 2</span></label>
          <label class="thumb"><span class="face red">셋<input type="checkbox" checked></span><span class="cap"><b>3</b>대지 3</span></label>
          <label class="thumb"><span class="face teal">넷<input type="checkbox" checked></span><span class="cap"><b>4</b>대지 4</span></label>
        </div>
        <div class="bscroll"><svg><use href="#left"/></svg><span></span><svg><use href="#right"/></svg></div>
      </div>
    </div>
    <div class="dright">
      <h2>선택:</h2>
      <div class="group">
        <div class="row r40"><label class="w190"><input type="radio" name="sel" checked>모두(<u>A</u>)</label><label for="rng" class="rl"><input id="rng" type="radio" name="sel">범위(<u>R</u>):</label><input class="field grow" aria-label="범위" type="text" value="1-4"></div>
        <label class="row bleed"><input type="checkbox" checked>도련 포함(<u>I</u>)</label>
        <hr>
        <label class="row"><input type="radio" name="sel">전체 문서(<u>F</u>)</label>
      </div>
      <h2 class="h-loc">내보낼 위치:</h2>
      <div class="row path"><span class="pathbox"><input class="field focus" aria-label="내보낼 위치" type="text" value="C:₩Users₩Desktop₩블로그₩블로그썸네일₩출력"><i class="caret"></i></span><svg class="folder"><use href="#fold"/></svg></div>
      <label class="row in opt1"><input type="checkbox" checked>내보내기 후 위치 열기(<u>O</u>)</label>
      <label class="row in opt2"><input type="checkbox">하위 폴더 생성(<u>C</u>)</label>
      <div class="row in2 opt2"><label><input type="radio" name="sub" checked>크기 조절(<u>S</u>)</label><label><input type="radio" name="sub">형식(<u>F</u>)</label></div>
      <div class="row pdf"><span>PDF 내보내기 형식:</span><label class="off"><input type="radio" name="pdf" disabled>단일 파일(<u>S</u>)</label><label class="off"><input type="radio" name="pdf" checked disabled>여러 파일(<u>M</u>)</label></div>
      <div class="row fmt"><span class="fl">서식:</span><button type="button">iOS</button><button type="button">Android</button><svg class="i24" viewBox="0 0 24 24"><path d="M0 2h4M0 12h4M0 22h4M8 2h16M8 12h16M8 22h16" stroke="#c4c4c4" stroke-width="4"/></svg><i class="fsep"></i><svg class="i22" viewBox="0 0 22 22"><path d="M11 0v22M0 11h22M4 4l14 14M18 4L4 18" stroke="#c4c4c4" stroke-width="4"/><circle cx="11" cy="11" r="5.500" fill="#535353" stroke="#c4c4c4" stroke-width="4"/></svg></div>
      <div class="group fbox">
        <div class="fh"><span>크기 조절</span><span>접미어</span><span>포맷</span></div>
        <div class="fr"><input class="field" aria-label="크기 조절" type="text" value="1x"><button class="ddb" type="button" aria-label="크기 목록"><svg><use href="#tri"/></svg></button><input class="field suf" aria-label="접미어" type="text" placeholder="없음"><span class="sel"><select aria-label="포맷"><option>PNG</option></select><svg><use href="#down"/></svg></span><button class="del" type="button" aria-label="삭제"><svg><use href="#x"/></svg></button></div>
        <button class="add" type="button"><svg viewBox="0 0 20 20"><path d="M10 0v20M0 10h20" stroke="#c4c4c4" stroke-width="4"/></svg>비율 추가</button>
      </div>
    </div>
  </div>
  <div class="dfoot">
    <div class="toggle"><button class="on" type="button" aria-label="작은 축소판"><svg viewBox="0 0 22 22"><path d="M0 0h10v10H0zM12 0h10v10H12zM0 12h10v10H0zM12 12h10v10H12z" fill="#fff"/></svg></button><button type="button" aria-label="목록"><svg viewBox="0 0 28 22"><path d="M0 0h6v6H0zM8 4h3v2H8zM16 0h6v6h-6zM24 4h3v2h-3zM0 8h6v6H0zM8 12h3v2H8zM16 8h6v6h-6zM24 12h3v2h-3zM0 16h6v6H0zM8 20h3v2H8zM16 16h6v6h-6zM24 20h3v2h-3z" fill="#c4c4c4"/></svg></button></div>
    <button class="clear" type="button">선택 취소</button>
    <label class="pl" for="prefix">접두어(<u>P</u>):</label><input class="field" id="prefix" type="text"><button class="ddb" type="button" aria-label="접두어 목록"><svg><use href="#tri"/></svg></button>
  </div>
  <div class="dact"><p>선택한 대지: 4개, 총 내보낸 대지: 4개</p><button class="pill main" type="button">대지 내보내기</button><button class="pill" type="button">취소</button></div>
  <span class="resize"></span>
</form>

<footer class="taskbar">
  <div class="weather">
    <svg viewBox="0 0 56 60"><path d="M8 56Q0 52 1 44q2-10 11-11 4-14 16-13 13 1 16 14 9 2 8 12-1 8-8 10z" fill="url(#cloudy)"/><circle cx="38" cy="16" r="16" fill="#ff99a4"/><text x="38" y="23" text-anchor="middle">6</text></svg>
    <p>-1°C<br>흐림</p>
  </div>
  <nav class="tasks">
    <button aria-label="시작"><svg viewBox="0 0 48 48"><path d="M1 1h22v22H1zM25 1h22v22H25zM1 25h22v22H1zM25 25h22v22H25z" fill="url(#sky)"/></svg></button>
    <button aria-label="검색"><svg viewBox="0 0 48 48"><path d="M33 33l10 11" stroke="#dcdfe6" stroke-width="6" stroke-linecap="round"/><circle cx="22" cy="20" r="16" fill="#434c6b" stroke="#e8eaee" stroke-width="5"/></svg></button>
    <button aria-label="작업 보기"><svg viewBox="0 0 48 48"><path d="M0 13h36v32H0z" fill="#616161"/><path d="M12 1h36v32H12z" fill="#f0f0f0"/><path d="M12 13h24v20H12z" fill="#b5b5b5"/></svg></button>
    <button class="run" aria-label="파일 탐색기"><svg viewBox="0 0 48 48"><path d="M0 5q0-2 2-2h13l5 5v6H0z" fill="#dd9c0a"/><path d="M0 10h14l5-3h27q2 0 2 2v36H0z" fill="url(#gold)"/><path d="M8 45V35q0-4 4-4h24q4 0 4 4v10z" fill="#0f79c7"/><path d="M14 38h20" stroke="#0a4f8e" stroke-width="2"/></svg></button>
    <button aria-label="Store"><svg viewBox="0 0 48 48"><path d="M1 6h46v35q0 6-6 6H7q-6 0-6-6z" fill="#eee"/><path d="M12 10V1h24v9" fill="none" stroke="#19a4ee" stroke-width="4"/><path d="M14 16h9v9h-9z" fill="#f25022"/><path d="M25 16h9v9h-9z" fill="#7fba00"/><path d="M14 27h9v9h-9z" fill="#00a4ef"/><path d="M25 27h9v9h-9z" fill="#ffb900"/></svg></button>
    <button class="run" aria-label="카카오톡"><svg viewBox="0 0 48 48"><rect width="48" height="48" rx="5" fill="#fae100"/><ellipse cx="24" cy="22" rx="18" ry="15" fill="#3b1e1e"/><path d="M14 32l-2 10 10-7z" fill="#3b1e1e"/><text class="talk" x="24" y="27" text-anchor="middle">TALK</text></svg></button>
    <button aria-label="이퀄라이저"><svg viewBox="0 0 48 48"><rect width="48" height="48" rx="4" fill="#8b7cf8"/><path d="M8 9h32v30H8zM17 15v18M24 15v18M31 15v18M14 27h6M21 21h6M28 27h6" fill="none" stroke="#fff" stroke-width="2"/></svg></button>
    <button aria-label="메모장"><svg viewBox="0 0 48 48"><path d="M6 3h36v36H6z" fill="#4ec3e0"/><path d="M6 39h36v5H6z" fill="#f0f0f0"/><path d="M6 44h36v4H6z" fill="#a44f12"/><path d="M12 15h24M12 23h24M12 31h24" stroke="#0a5a7a" stroke-width="3"/><path d="M12 0v6M20 0v6M28 0v6M36 0v6" stroke="#155f85" stroke-width="3"/></svg></button>
    <button aria-label="Edge"><svg viewBox="0 0 48 48"><circle cx="24" cy="24" r="24" fill="#0c6fc4"/><path d="M0 22Q3 0 25 0q20 1 23 20 0 13-14 13-7-1-4-5 3-8-6-11Q10 10 0 22z" fill="url(#edgeA)"/><path d="M20 20q-10 10 0 20 9 7 22-3-6 12-20 11Q5 43 10 28q3-7 10-8z" fill="#1593df"/></svg></button>
    <button class="run" aria-label="Chrome"><svg viewBox="0 0 48 48"><circle cx="24" cy="24" r="24" fill="#fbc116"/><path d="M3 12A24 24 0 0 1 45 12H24L14 30z" fill="#e33b2e"/><path d="M3 12a24 24 0 0 0 20 36l11-18H14z" fill="#269949"/><circle cx="24" cy="24" r="12" fill="#fff"/><circle cx="24" cy="24" r="9" fill="#1a73e8"/></svg></button>
    <button class="run" aria-label="Notion"><svg viewBox="0 0 48 48"><path d="M5 5l30-3 9 7v34l-31 3-8-9z" fill="#fff" stroke="#111" stroke-width="2"/><path d="M6 7l9 6 28-3M14 13v32" fill="none" stroke="#111" stroke-width="3"/><text class="nn" x="29" y="38" text-anchor="middle">N</text></svg></button>
    <button class="run" aria-label="Creative Cloud"><span class="cc"><svg viewBox="0 0 48 48"><path d="M28 14a11 11 0 1 0-8 20h12a9 9 0 0 0 2-18q-3-8-12-7-13 2-12 15 2 11 13 10 5-3 2-8l-3-5q0-4 5-5 6 0 7 6 0 5-5 6" fill="none" stroke="#fff" stroke-width="3"/></svg></span></button>
    <button class="cur" aria-label="Illustrator"><span class="ai-badge big">Ai</span></button>
    <button aria-label="휴대폰과 연결"><svg viewBox="0 0 48 48"><path d="M3 3h42v34H3z" fill="#1594dc"/><path d="M0 34h48v4H0z" fill="#0b5da8"/><path d="M13 38h21v9H13z" fill="#15507f"/><path d="M13 7h21v31H13z" fill="#1783d0"/><path d="M13 7h21v20H13z" fill="#35c3f3"/><path d="M19 11h9" stroke="#d9f5ff" stroke-width="2"/></svg></button>
    <button aria-label="W"><svg viewBox="0 0 48 52"><rect x="0" y="0" width="48" height="52" rx="3" fill="#7b61f0"/><path d="M25 0h6v52h-6zM33 0h8v52h-8z" fill="#4a14b8"/><text class="ww" x="13" y="23" text-anchor="middle">W</text></svg></button>
    <button aria-label="Chrome 원격"><svg viewBox="0 0 48 48"><path d="M9 3h36v34H9z" fill="#b9b9b9"/><path d="M12 9h30v24H12z" fill="#fff"/><path d="M3 13h36v33H3z" fill="#f4f4f4" stroke="#9a9a9a" stroke-width="2"/><path d="M8 46a13 13 0 0 1 27 0z" fill="#fbc116"/><path d="M9 40q4-11 13-11 8 0 12 10l-12 1-5 6z" fill="#e33b2e"/><path d="M9 40l9 6H8z" fill="#269949"/><circle cx="22" cy="43" r="5" fill="#3c8af0"/><path d="M2 46h38v3H2z" fill="#9a9a9a"/></svg></button>
    <button aria-label="전자도서관"><svg viewBox="0 0 50 54"><rect width="50" height="54" rx="4" fill="#43b035"/><path d="M0 36h25v18H4q-4 0-4-4z" fill="#d8d8d8"/><path d="M25 36h25v14q0 4-4 4H25z" fill="#fff"/><path d="M39 36h6v8l-3-2-3 2z" fill="#43b035"/><path d="M21 7q4 4 8 0l-2 6h-4z" fill="#fff"/><text class="ky" x="25" y="19" text-anchor="middle">KYOBO 교보문고</text><text class="ky k2" x="25" y="29" text-anchor="middle">전자도서관</text></svg></button>
    <i></i>
    <button aria-label="스티커 메모"><svg viewBox="0 0 48 48"><path d="M3 0h42v48H3z" fill="#fdd20e"/><path d="M24 24h21L24 48z" fill="#484848"/><path d="M45 24v24H24z" fill="#f2a90b"/></svg></button>
    <button aria-label="더 보기"><svg class="mored" viewBox="0 0 32 8"><circle cx="4" cy="4" r="3.500"/><circle cx="16" cy="4" r="3.500"/><circle cx="28" cy="4" r="3.500"/></svg></button>
    <i></i>
  </nav>
  <div class="tray">
    <svg class="t1" viewBox="0 0 22 14"><path d="M2 12l9-9 9 9" fill="none" stroke="#fff" stroke-width="2.500"/></svg>
    <svg class="t2" viewBox="0 0 36 36"><path d="M4 17Q6 4 18 4q7 0 12 7M30 3v9h-9M12 31q-6-3-8-8v9M4 23h8" fill="none" stroke="#fff" stroke-width="2.500"/><circle cx="25" cy="25" r="9" fill="#ff9a0c"/></svg>
    <svg class="t3" viewBox="0 0 26 34"><path d="M1 33L13 2l12 31M6 22h14" fill="none" stroke="#fff" stroke-width="2.200"/></svg>
    <svg class="t4" viewBox="0 0 34 26"><path d="M2 10q15-15 30 0M7 15q10-10 20 0M12 20q5-5 10 0" fill="none" stroke="#fff" stroke-width="2.500"/><circle cx="17" cy="23" r="2.500" fill="#fff"/></svg>
    <svg class="t5" viewBox="0 0 32 26"><path d="M2 9h5l7-7v22l-7-7H2zM20 9l9 9M29 9l-9 9" fill="none" stroke="#fff" stroke-width="2"/></svg>
    <svg class="t6" viewBox="0 0 34 30"><path d="M12 6h16v9M6 12v13h14" fill="none" stroke="#fff" stroke-width="2.500"/><path d="M9 0L2 14h5l-2 8 9-13H9l3-9zM26 30q-8-5-8-10 1-5 8-2 7-3 8 2 0 5-8 10zM10 11h15v5l-8 3v4h-7z" fill="#fff"/></svg>
    <p>오전 10:03<br>2025-01-16</p>
    <svg class="t7" viewBox="0 0 28 32"><path d="M12 2q10 0 10 11 0 7 5 11H0q3-4 3-11Q3 2 12 2zM8 27h10q-5 7-10 0z" fill="#fff"/><path d="M8 10h7l-7 9h7" fill="none" stroke="#1c222d" stroke-width="2"/><path d="M19 1h8l-8 8h8" fill="none" stroke="#fff" stroke-width="2"/></svg>
  </div>
</footer>
</body>
</html>
```
FILE: styles.css
```css
* { box-sizing: border-box; }
body {
  margin: 0;
  min-height: 100vh;
  position: relative;
  display: flex;
  flex-direction: column;
  overflow: hidden;
  background: #535353;
  color: #e8e8e8;
  font: 22px/30px "Open Sans", "Noto Sans CJK KR", sans-serif;
  --line: #383838;
  --icon: #c4c4c4;
}
button, input, select { font: inherit; color: inherit; margin: 0; padding: 0; border: 0; background: none; outline: 0; min-width: 0; }
p, h1, h2, hr { margin: 0; font-weight: 400; }
a { color: inherit; text-decoration: none; }
svg { display: block; flex: none; }
b { font-weight: 700; }
i { font-style: normal; }
.defs { position: absolute; width: 0; height: 0; }
.dim { color: #757575; }
.teal { background: #279991; }
.red { background: #d21f38; }

/* Title bar */
.titlebar { display: flex; align-items: center; height: 62px; padding-left: 20px; border-bottom: 2px solid var(--line); flex: none; }
.ai-badge { width: 32px; height: 30px; border-radius: 5px; background: #330000; color: #ff9a00; font: 700 20px/28px "Open Sans", sans-serif; text-align: center; }
.ai-badge.big { display: block; width: 44px; height: 42px; font-size: 24px; line-height: 40px; }
.home { width: 36px; height: 32px; margin: 0 28px; }
.vsep { width: 2px; height: 40px; background: #616161; }
.menus { display: flex; gap: 28px; margin: 0 24px 0 31px; font-size: 26px; white-space: nowrap; }
.title-right { margin-left: auto; display: flex; align-items: center; height: 60px; }
.share { width: 88px; height: 48px; border-radius: 24px; background: #1473e6; color: #fff; font-size: 25px; }
.bell { width: 32px; height: 34px; margin: 0 28px 0 26px; }
.find { width: 34px; height: 34px; margin-right: 27px; }
.lay { width: 34px; height: 24px; margin: 0 36px 0 40px; }
.work { width: 34px; height: 28px; margin-right: 25px; }
.wincontrols { display: flex; align-self: flex-start; width: 166px; height: 38px; margin-right: 7px; border: 2px solid #646464; border-top: 0; border-radius: 0 0 6px 6px; }
.wincontrols button { flex: 1; display: grid; place-items: center; }
.wincontrols button + button { border-left: 2px solid #646464; }
.wincontrols svg { width: 28px; height: 24px; }

/* Control bar */
.control { display: flex; align-items: center; height: 68px; flex: none; padding-left: 9px; border-bottom: 2px solid var(--line); border-left: 2px solid var(--line); white-space: nowrap; }
.vgrip { width: 4px; height: 40px; background: repeating-linear-gradient(#383838 0 2px, transparent 2px 4px); }
.c-state { width: 160px; margin-left: 16px; color: #b5b5b5; font-size: 22px; }
.csep { width: 2px; height: 50px; background: #4a4a4a; margin: 0 11px 0 12px; }
.csep.tall { height: 64px; margin: 0 28px 0 14px; }
.combo { display: flex; align-items: stretch; height: 42px; border: 2px solid #646464; border-radius: 4px; background: #464646; margin-right: 11px; }
.combo button { width: 35px; display: grid; place-items: center; border-left: 2px solid #646464; }
.combo svg, .chev { width: 18px; height: 12px; }
.combo svg.sr { width: 12px; height: 18px; }
.sw { width: 38px; background: #fff; }
.sw.pale { background: #e3e3e3; }
.sw.none { display: grid; place-items: center; background: #fff; position: relative; }
.sw.none::after { content: ""; position: absolute; inset: 0; background: linear-gradient(135deg, transparent 46%, #f00 46% 54%, transparent 54%); }
.sw i { width: 14px; height: 14px; border: 2px solid #222; }
.dotted { padding-bottom: 0; border-bottom: 2px dotted #b5b5b5; line-height: 26px; font-size: 21px; }
.c-stroke { margin: 8px 10px 0 14px; }
.c-step { width: 162px; }
.c-step input { width: 92px; }
.combo .steps { width: 34px; display: flex; flex-direction: column; justify-content: space-around; align-items: center; border-right: 2px solid #646464; }
.profile { display: flex; align-items: center; height: 42px; background: #5a5a5a; color: #7a7a7a; margin-right: 11px; }
.profile span { width: 180px; height: 42px; background: #808080; }
.profile svg { width: 18px; height: 12px; margin: 0 10px; }
.brush { width: 172px; background: #e3e3e3; color: #111; display: flex; align-items: center; font-size: 20px; }
.brush b { width: 48px; padding-left: 14px; }
.c-op { margin: 4px 12px 0 4px; }
.c-opv input { width: 104px; padding-left: 5px; font-size: 20px; }
.c-opv button { width: 32px; }
.c-style { margin: 0 12px 0 3px; color: #b5b5b5; font-size: 21px; }
.c-sep2 { margin-left: 0; margin-right: 11px; }
.cbtn { width: 128px; height: 38px; margin-right: 10px; border: 2px solid #757575; border-radius: 4px; color: #fff; font-size: 22px; line-height: 30px; }
.i36 { width: 36px; height: 36px; margin-left: 8px; }
.csep + .i36 { margin-left: 0; }
.chev { margin-left: 10px; }
.chev.dim { margin-left: 15px; }
.i32 { width: 32px; height: 32px; }
.i24 { width: 24px; height: 24px; }
.i22 { width: 22px; height: 22px; }
.control-right { margin-left: auto; display: flex; align-items: center; padding-right: 33px; }
.control-right .i32 + .i32 { margin-left: 21px; }
.gapl { margin-left: 37px; }

/* Work area */
.app { flex: 1; display: flex; min-height: 0; border-bottom: 3px solid var(--line); }
.dhead { height: 24px; background: #434343; border-bottom: 2px solid var(--line); color: #bbb; font-size: 24px; line-height: 16px; text-align: right; padding-right: 14px; }
.dhead.left { text-align: left; padding-left: 11px; }
.grip { display: block; width: 38px; height: 8px; margin: 8px auto 0; background: repeating-linear-gradient(90deg, #383838 0 2px, transparent 2px 4px); }
.toolbar { width: 148px; flex: none; border-left: 2px solid var(--line); border-right: 4px solid var(--line); color: var(--icon); }
.tools { display: grid; grid-template-columns: 60px 60px; grid-auto-rows: 48px; margin: 23px 0 0 10px; }
.tools button { position: relative; display: grid; place-items: center; }
.tools svg { width: 34px; height: 34px; }
.tools .on { background: #2f2f2f; border: 1px solid #606060; border-radius: 5px; height: 44px; width: 58px; align-self: center; }
.more::after { content: ""; position: absolute; right: 4px; bottom: 5px; border-bottom: 7px solid var(--icon); border-left: 7px solid transparent; }
.tline { border: 0; border-top: 2px solid #4a4a4a; margin: 3px 10px 8px; }
.fs { width: 120px; height: 108px; margin-left: 9px; }
.trio { display: flex; width: 120px; height: 40px; margin: 13px 0 0 10px; border: 2px solid #616161; border-radius: 4px; }
.trio button { flex: 1; display: grid; place-items: center; }
.trio button + button { border-left: 2px solid #616161; }
.trio svg { width: 26px; height: 26px; }
.trio + .trio { margin-top: 9px; height: 38px; }
.trio + .trio svg { width: 22px; height: 20px; }
.on { background: #2f2f2f; }
.screenmode { width: 44px; height: 32px; margin: 15px 0 0 48px; }
.dots3 { width: 30px; height: 8px; margin: 45px 0 0 55px; fill: var(--icon); }

.doc { flex: 1; display: flex; flex-direction: column; min-width: 0; border-right: 4px solid var(--line); }
.tabs { display: flex; height: 58px; flex: none; background: #434343; border-bottom: 2px solid var(--line); }
.tab { display: flex; align-items: center; padding: 0 13px 0 19px; color: #9c9c9c; border-right: 2px solid var(--line); font-size: 25px; white-space: nowrap; }
.tab.active { background: #535353; color: #f0f0f0; padding-left: 20px; }
.tab svg { width: 14px; height: 14px; margin-left: 30px; }
.tab .cloud { width: 68px; height: 44px; margin: 0 15px 0 0; }
.stage { flex: 1; display: flex; min-height: 0; }
.stage-main { flex: 1; display: flex; flex-direction: column; min-width: 0; }
.canvas { flex: 1; position: relative; overflow: hidden; background: #5f5f5f; }
.art { position: absolute; color: #fff; font-weight: 700; font-size: 62px; line-height: 164px; white-space: nowrap; overflow: hidden; }
.art.l { left: 236px; width: 20px; height: 328px; top: 346px; border: 2px solid #888; }
.art.l.red { top: 804px; }
.art.r { left: 1910px; right: 0; height: 164px; top: 346px; padding-left: 65px; }
.art.r.red { top: 510px; }
.hint { display: flex; align-items: center; height: 50px; flex: none; padding-left: 10px; border-top: 2px solid #4a4a4a; color: #b5b5b5; font-size: 22px; line-height: 26px; white-space: nowrap; }
.hint i { padding: 0 11px; }
.hint b { color: #c8c8c8; }
.q { width: 28px; height: 28px; border-radius: 14px; margin-right: 22px; background: #b8b8b8; color: #444; font: 700 22px/28px "Open Sans", sans-serif; text-align: center; }
.vscroll { width: 32px; background: #4b4b4b; color: #9a9a9a; display: grid; grid-template-rows: 34px 1fr 34px; place-items: center; }
.vscroll svg { width: 16px; height: 12px; }
.vscroll span { width: 30px; height: 50px; margin-bottom: 12px; border-radius: 15px; background: #616161; }
.status { display: flex; align-items: center; height: 33px; flex: none; padding-left: 5px; background: #535353; overflow: hidden; }
.status .combo { height: 44px; align-self: flex-start; margin: 0 8px 0 0; font-size: 20px; }
.zoomv input { width: 100px; padding-left: 4px; }
.zoomv button { width: 34px; }
.status .zoomv + .nav { margin: 0 14px 0 9px; }
.pagev input { width: 80px; padding-left: 3px; }
.pagev button { width: 36px; }
.nav { width: 50px; height: 18px; }
.pagev + .nav { margin-left: 8px; }
.stext { width: 406px; margin-left: 14px; border: 2px solid #4a4a4a; border-width: 0 2px; text-align: center; color: #b5b5b5; font-size: 22px; }
.play { width: 12px; height: 18px; margin: 0 10px; }
.hscroll { flex: 1; display: flex; align-items: center; justify-content: space-between; height: 33px; margin-right: 32px; padding: 0 12px; background: #4b4b4b; color: #9a9a9a; }
.hscroll span { width: 50px; height: 30px; border-radius: 15px; background: #616161; margin-left: 24px; }
.hscroll svg { width: 10px; height: 16px; }

/* Docked panels */
.dock { display: flex; flex: none; background: var(--line); padding: 0 2px; width: 654px; color: var(--icon); }
.col { background: #535353; margin-right: 4px; }
.strip { width: 76px; flex: none; border-left: 1px solid #4c4c4c; }
.sec { border-bottom: 2px solid var(--line); padding-bottom: 6px; }
.sec .grip { margin-bottom: 2px; }
.sec button { display: grid; place-items: center; width: 100%; height: 56px; }
.sec svg { width: 34px; height: 36px; }
.panels { flex: 1; display: flex; flex-direction: column; margin-right: 0; min-width: 0; }
.panels .dhead { flex: none; padding-right: 10px; }
.ptabs { display: flex; height: 54px; background: #434343; }
.ptab { display: flex; align-items: center; padding: 0 17px 6px 20px; border-right: 2px solid var(--line); border-bottom: 2px solid var(--line); color: #9a9a9a; font-size: 25px; }
.ptab.act { background: #535353; border-bottom: 0; color: #f0f0f0; }
.ud { width: 10px; height: 20px; margin: 8px 13px 0 -10px; }
.phead { flex: 1; display: flex; justify-content: flex-end; align-items: center; border-bottom: 2px solid var(--line); padding-right: 12px; }
.mn { width: 20px; height: 16px; }
.colorbody { padding: 12px 35px 14px 10px; }
.ctop { display: flex; }
.cfs { width: 66px; height: 100px; }
.sliders { flex: 1; display: grid; grid-template-columns: 26px 1fr 72px 24px; row-gap: 8px; align-items: center; margin: 5px 0 0 28px; font-size: 20px; }
.sliders label { text-align: center; color: #bbb; }
.sliders span { color: #b0b0b0; padding-left: 4px; }
.num { height: 42px; width: 72px; border: 2px solid #5e5e5e; border-radius: 4px; background: #434343; padding-left: 7px; font-size: 20px; color: #fff; }
.rg { appearance: none; height: 24px; margin: 6px 6px 0 0; background: no-repeat center top / calc(100% - 18px) 8px; }
.rg::-webkit-slider-thumb { appearance: none; width: 18px; height: 15px; margin-top: 9px; background: #b8b8b8; clip-path: polygon(50% 0, 100% 50%, 100% 100%, 0 100%, 0 50%); }
.rg.c { background-image: linear-gradient(90deg, #fff, #00b0ec 70%, #00a0e9); }
.rg.m { background-image: linear-gradient(90deg, #fff, #e4007f 95%); }
.rg.y { background-image: linear-gradient(90deg, #fff, #fff000 90%); }
.rg.k { background-image: linear-gradient(90deg, #fff, #231815); }
.hexrow { display: flex; align-items: center; margin: 14px 0 10px; }
.mini { display: flex; gap: 2px; padding: 2px; background: #2b2b2b; }
.mini span { width: 24px; height: 24px; background: #fff; }
.mini .black { background: #050201; }
.slash, .mini .slash { background: linear-gradient(135deg, transparent 44%, #f00 44% 56%, transparent 56%) #fff; }
.hexrow label { margin-left: auto; margin-right: 12px; }
.hex { width: 130px; padding-left: 8px; }
.spectrum {
  height: 378px; margin: 0 0 0 3px; border: 2px solid #2b2b2b;
  background:
    linear-gradient(#fff 0, rgba(255,255,255,.78) 8%, rgba(255,255,255,.48) 20%, rgba(255,255,255,.2) 36%, transparent 50%, rgba(0,0,0,.06) 58%, rgba(0,0,0,.5) 78%, rgba(0,0,0,.93) 96%, #000),
    linear-gradient(90deg, #e81414 0, #f29a18 9%, #f3ec22 17%, #8cc320 25%, #62b52e 34%, #57b75c 42%, #62c2c6 50%, #2aa7df 54%, #1467b2 60%, #1d429b 67%, #5a3f96 75%, #a34f9b 84%, #e5268a 91%, #e8122a 98%);
}
.swatches { flex: 1; display: flex; flex-direction: column; border-top: 4px solid var(--line); }
.swhead { display: flex; align-items: flex-end; padding: 14px 10px 10px; flex: none; }
.sfs { width: 60px; height: 60px; margin-bottom: 2px; }
.vb { display: grid; place-items: center; width: 52px; height: 52px; margin: 0 10px 0 auto; border: 2px solid #757575; border-radius: 4px; }
.vb svg { width: 36px; height: 36px; }
.vgroup { display: flex; width: 98px; height: 52px; border: 2px solid #616161; border-radius: 4px; }
.vgroup button { flex: 1; display: grid; place-items: center; }
.vgroup svg { width: 28px; height: 28px; }
.swbox { flex: 1; margin: 0 10px; border: 2px solid #5e5e5e; }
.swgrid { display: grid; grid-template-columns: repeat(15, 26px); grid-auto-rows: 26px; gap: 2px; }
.swgrid > svg { width: 26px; height: 26px; }
.grp { margin-top: 6px; }
.grp > svg { padding: 3px 1px; }
.framed { background: #fff; border: 2px solid #fff; outline: 2px solid #000; outline-offset: -5px; }
.gbw { background: linear-gradient(90deg, #fff, #6e645e 50%, #000); }
.gblue { background: linear-gradient(90deg, #c9dcf0, #2b97d3 60%, #0b64b0); }
.gpink { background: linear-gradient(90deg, #ee7bab, transparent), conic-gradient(#ccc 25%, #fff 0 50%, #ccc 0 75%, #fff 0) 0 0 / 8px 8px; }
.gorange { background: radial-gradient(#ffe9d0, #f28c28 65%); }
.gcircle { background: radial-gradient(transparent 10px, #d9c15a 10px 11px, #fff 12px), conic-gradient(#ccc 25%, #fff 0 50%, #ccc 0 75%, #fff 0) 0 0 / 8px 8px; }
.swfoot { display: flex; align-items: center; gap: 20px; height: 40px; padding: 0 54px 0 20px; flex: none; }
.swfoot svg { width: 30px; height: 26px; }
.swfoot svg:nth-child(n+4) { width: 26px; height: 24px; margin-left: 3px; }
.swfoot .push { margin-left: auto; }

/* Export dialog */
.dialog {
  position: absolute; left: 391px; top: 324px; width: 1680px;
  background: #535353; border: 1px solid #686868; border-radius: 14px; overflow: hidden;
  box-shadow: 0 60px 90px rgba(0,0,0,.34), 0 0 70px rgba(0,0,0,.22);
  color: #fff; font-size: 26px; line-height: 36px; white-space: nowrap;
}
.dialog h1 { height: 55px; background: #f0f3fa; color: #111; font-size: 26px; line-height: 50px; padding-left: 12px; }
.dialog h2 { font-size: 26px; line-height: 36px; color: #bdbdbd; padding-left: 2px; }
.dbody { display: grid; grid-template-columns: 936px 1fr; gap: 21px; padding: 0 29px 0 30px; }
.dleft { display: flex; flex-direction: column; padding-top: 45px; }
.dtabs { display: flex; align-self: center; height: 35px; border: 2px solid #616161; border-bottom: 0; border-radius: 4px 4px 0 0; }
.dtabs button { width: 87px; line-height: 33px; font-size: 25px; }
.dtabs .on { color: #4b9ff0; }
.boards { flex: 1; display: flex; flex-direction: column; justify-content: space-between; border: 2px solid #616161; border-radius: 3px; }
.thumbs { display: flex; gap: 58px; padding: 21px 0 0 27px; }
.dialog .thumb { display: block; width: 180px; }
.face { position: relative; display: block; height: 180px; border: 4px solid #4a9df0; box-shadow: inset 0 0 0 2px #f0f0f0; font-size: 45px; line-height: 170px; font-weight: 700; text-align: center; }
.face input { position: absolute; left: 2px; bottom: 2px; }
.cap { display: flex; margin-top: 10px; padding-left: 8px; color: #bdbdbd; font-size: 21px; }
.cap b { width: 36px; font-weight: 400; color: #eee; }
.bscroll { display: flex; align-items: center; justify-content: space-between; height: 22px; padding: 0 6px 0 4px; background: #4b4b4b; color: #aaa; }
.bscroll span { flex: 1; height: 20px; margin: 0 20px 0 8px; border-radius: 10px; background: #606060; }
.bscroll svg { width: 10px; height: 16px; }

input[type=checkbox], input[type=radio] { appearance: none; flex: none; width: 24px; height: 24px; border: 2px solid #c4c4c4; margin: 0 11px 0 0; }
input[type=checkbox] { border-radius: 3px; }
input[type=radio] { width: 26px; height: 26px; border-radius: 50%; margin: 0 9px 0 0; }
input[type=radio]:checked { background: radial-gradient(circle, #535353 0 4px, #c4c4c4 5px); }
input[type=checkbox]:checked { background: #c4c4c4; }
input[type=checkbox]:checked::after { content: ""; display: block; width: 8px; height: 13px; margin: 0 0 0 6px; border: solid #444; border-width: 0 4px 4px 0; transform: rotate(38deg); }
.face input[type=checkbox] { width: 36px; height: 36px; margin: 0; border: 4px solid rgba(0,0,0,.68); border-radius: 6px; background-clip: padding-box; }
.face input[type=checkbox]:checked::after { margin: 3px 0 0 9px; width: 10px; height: 16px; border-color: #3a1414; }
.face.teal input[type=checkbox]:checked::after { border-color: #0f3c39; }
label { display: flex; align-items: center; }
label.dotted { display: block; }
u { text-underline-offset: 4px; text-decoration-thickness: 2px; }
.row { display: flex; align-items: center; height: 36px; }
.dright { padding-top: 44px; min-width: 0; }
.group { margin-top: 21px; border: 2px solid #4c4c4c; border-radius: 4px; padding: 18px 18px 16px; }
.group hr { border: 0; border-top: 2px solid #4c4c4c; margin: 17px 0 19px; }
.group .row { margin-bottom: 1px; }
.r40 { height: 42px; padding-left: 2px; }
.group > label { padding-left: 2px; }
.w190 { width: 176px; }
.rl { width: 138px; }
.field { height: 42px; border: 2px solid #646464; border-radius: 4px; background: #434343; padding-left: 9px; font-size: 24px; line-height: 36px; }
.grow { flex: 1; }
.bleed { margin-top: 15px; }
.h-loc { margin-top: 25px; }
.path { height: 42px; margin: 21px 0 0 20px; }
.pathbox { position: relative; width: 502px; }
.pathbox .focus { width: 100%; padding: 0 3px 0 7px; background: #fff; border-color: #4a97e4; color: #4a4a4a; font-size: 25px; }
.caret { position: absolute; left: 107px; top: 6px; width: 1px; height: 30px; background: #000; }
.folder { width: 32px; height: 26px; margin: 6px 0 0 30px; color: var(--icon); }
.in { padding-left: 22px; }
.in2 { padding-left: 42px; gap: 24px; }
.opt1 { margin-top: 17px; }
.opt2 { margin-top: 14px; }
.in2.opt2 { margin-top: 15px; }
.pdf { margin-top: 35px; gap: 23px; color: #c8c8c8; }
.off { color: #777; }
.off input[type=radio] { border-color: #777; }
.off input[type=radio]:checked { background: radial-gradient(circle, #535353 0 4px, #777 5px); }
.fmt { margin-top: 29px; color: #dcdcdc; }
.fl { margin-right: auto; color: #c4c4c4; }
.fmt button { font-size: 20px; margin-right: 45px; }
.fmt button + button { margin-right: 35px; }
.fsep { width: 2px; height: 30px; margin: 0 10px 0 15px; background: #474747; }
.fmt .i22 { margin-right: 10px; }
.fbox { margin-top: 7px; padding: 4px 16px 22px 14px; }
.fh { display: grid; grid-template-columns: 164px 230px 1fr; padding-left: 4px; color: #777; }
.fr { display: flex; align-items: stretch; height: 42px; margin: 12px 0 10px 2px; }
.fr .field { width: 130px; font-size: 23px; }
.ddb { display: grid; place-items: center; width: 40px; height: 42px; margin-right: 3px; border: 2px solid #757575; border-radius: 4px; color: #c4c4c4; }
.ddb svg { width: 14px; height: 14px; }
.fr .suf { width: 191px; margin-right: 2px; }
::placeholder { color: #6e6e6e; opacity: 1; }
.sel { position: relative; width: 194px; }
.sel select { appearance: none; width: 100%; height: 42px; border: 2px solid #646464; border-radius: 4px; background: #4a4a4a; padding-left: 12px; font-size: 23px; }
.sel svg { position: absolute; right: 8px; top: 15px; width: 18px; height: 12px; }
.del { display: grid; place-items: center; width: 42px; color: #757575; }
.del svg { width: 24px; height: 24px; }
.add { display: flex; align-items: center; justify-content: center; gap: 14px; width: 612px; height: 48px; background: #434343; }
.add svg { width: 20px; height: 20px; }
.dfoot { display: flex; align-items: flex-start; margin-top: 14px; padding: 0 347px 0 30px; }
.toggle { display: flex; width: 88px; height: 44px; margin-right: auto; border: 2px solid #616161; border-radius: 3px; }
.toggle button { flex: 1; display: grid; place-items: center; }
.toggle svg { height: 22px; width: 26px; }
.clear { width: 146px; height: 40px; margin-right: 20px; border: 2px solid #757575; border-radius: 4px; line-height: 30px; }
.pl { width: 113px; height: 42px; color: #c8c8c8; }
.dfoot .field { width: 149px; }
.dfoot .ddb { margin-right: 0; }
.dact { display: flex; align-items: center; justify-content: flex-end; margin: 41px 29px 49px; }
.dact p { margin-right: 245px; color: #c4c4c4; }
.pill { width: 184px; height: 52px; border: 2px solid #fff; border-radius: 26px; }
.pill.main { width: 192px; border-width: 4px; margin-right: 20px; }
.resize { position: absolute; right: 1px; bottom: 2px; width: 20px; height: 20px; background: radial-gradient(circle, #868686 1px, transparent 1px) 0 0 / 4px 4px; clip-path: polygon(100% 0, 100% 100%, 0 100%); }

/* Taskbar */
.taskbar {
  display: flex; align-items: center; height: 94px; flex: none; padding-bottom: 2px; color: #fff; font-size: 23px; line-height: 32px; border-top: 1px solid #3a3f4b;
  background: linear-gradient(90deg, #1c202b 0, #1a2330 15%, #12215c 25%, #101f60 38%, #101e4f 42%, #121f60 46%, #1c2042 50%, #101f60 56%, #101f60 61%, #202128 67%, #222222 74%, #1b2330 79%, #1c222d 100%);
}
.weather { display: flex; align-items: center; width: 491px; padding-left: 37px; flex: none; }
.weather svg { width: 56px; height: 60px; margin-right: 7px; }
.weather text { font: 22px "Open Sans", sans-serif; fill: #111; }
.tasks { display: flex; align-items: center; }
.tasks button { position: relative; display: grid; place-items: center; width: 88px; height: 84px; }
.tasks svg { width: 48px; height: 48px; }
.tasks i { width: 2px; height: 92px; margin: 0 4px; background: #3d424d; }
.run::after, .cur::after { content: ""; position: absolute; left: 38px; bottom: 2px; width: 12px; height: 6px; border-radius: 3px; background: #9b9fb8; }
.cur::before { content: ""; position: absolute; inset: 0 4px; border-radius: 8px; background: rgba(255,255,255,.09); border: 1px solid rgba(255,255,255,.08); }
.cur::after { left: 28px; width: 32px; background: #4cc2ff; }
.talk { font: 700 12px "Open Sans", sans-serif; fill: #fae100; }
.nn { font: 700 28px "Liberation Serif", serif; fill: #111; }
.ww { font: 22px "Open Sans", sans-serif; fill: #fff; }
.ky { font: 5px "Open Sans", "Noto Sans CJK KR", sans-serif; fill: #fff; }
.k2 { font-size: 8px; }
.cc { display: block; width: 42px; height: 42px; border-radius: 8px; background: conic-gradient(from 0deg, #f3a21c, #e5e32f 15%, #61c34a 35%, #3d79e8 52%, #8a3ce0 65%, #e21a6a 80%, #f2321e 92%, #f3a21c); }
.tasks .cc svg { width: 42px; height: 42px; }
.tasks .mored { width: 32px; height: 8px; fill: #fff; }
.tray { display: flex; align-items: center; margin-left: auto; padding-right: 41px; }
.t1 { width: 22px; height: 14px; margin-right: 34px; }
.t2 { width: 36px; height: 36px; margin-right: 33px; }
.t3 { width: 26px; height: 34px; margin-right: 35px; }
.t4 { width: 34px; height: 26px; margin-right: 14px; }
.t5 { width: 32px; height: 26px; margin-right: 15px; }
.t6 { width: 34px; height: 32px; margin-right: 39px; }
.tray p { text-align: right; }
.t7 { width: 28px; height: 32px; margin-left: 17px; }
```
